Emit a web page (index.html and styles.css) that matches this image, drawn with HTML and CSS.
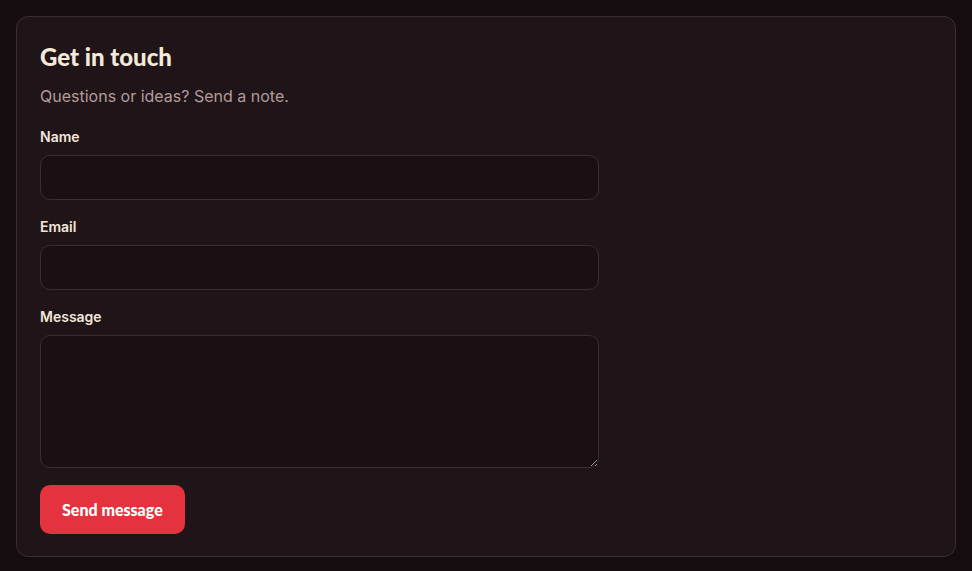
FILE: index.html
```html
<!DOCTYPE html>
<html lang="en">
<head>
<meta charset="utf-8">
<title>Get in touch</title>
<link rel="stylesheet" href="styles.css">
</head>
<body>
<main class="page">
  <section class="card">
    <h1 class="title">Get in touch</h1>
    <p class="subtitle">Questions or ideas? Send a note.</p>
    <form class="form">
      <div class="field">
        <label class="label" for="name">Name</label>
        <input class="input" id="name" type="text">
      </div>
      <div class="field">
        <label class="label" for="email">Email</label>
        <input class="input" id="email" type="email">
      </div>
      <div class="field">
        <label class="label" for="message">Message</label>
        <textarea class="input textarea" id="message"></textarea>
      </div>
      <div class="actions">
        <button class="button" type="button">Send message</button>
      </div>
    </form>
  </section>
</main>
</body>
</html>
```

FILE: styles.css
```css
* { box-sizing: border-box; }
html, body { margin: 0; padding: 0; }
body {
  background: #140c0f;
  font-family: Inter, "Noto Sans", sans-serif;
  color: #f3e6d8;
}
.page {
  padding: 16px;
}
.card {
  background: #1f1518;
  border: 1px solid #3a2e32;
  border-radius: 12px;
  padding: 24px 23px 22px;
  min-height: 540px;
}
.title {
  margin: 0;
  font-family: Lato, "Open Sans", sans-serif;
  font-weight: 900;
  font-size: 24px;
  line-height: 32px;
  color: #f6e9d9;
}
.subtitle {
  margin: 11px 0 0;
  font-size: 16px;
  line-height: 24px;
  color: #b39b9c;
}
.form {
  width: 559px;
  margin-top: 19px;
  display: flex;
  flex-direction: column;
  gap: 17px;
}
.field {
  display: flex;
  flex-direction: column;
  gap: 8px;
}
.label {
  font-size: 14px;
  font-weight: 600;
  line-height: 20px;
  color: #f3e6d8;
}
.input {
  width: 559px;
  height: 45px;
  background: #1a1013;
  border: 1px solid #3a2e32;
  border-radius: 10px;
  color: #f3e6d8;
  font: inherit;
  padding: 10px 12px;
}
.textarea {
  height: 133px;
  resize: vertical;
  display: block;
}
.actions {
  display: flex;
}
.button {
  background: #e5323f;
  color: #ffffff;
  border: none;
  border-radius: 10px;
  height: 49px;
  padding: 0 22px;
  font-family: Lato, "Open Sans", sans-serif;
  font-weight: 900;
  font-size: 16px;
}
```
